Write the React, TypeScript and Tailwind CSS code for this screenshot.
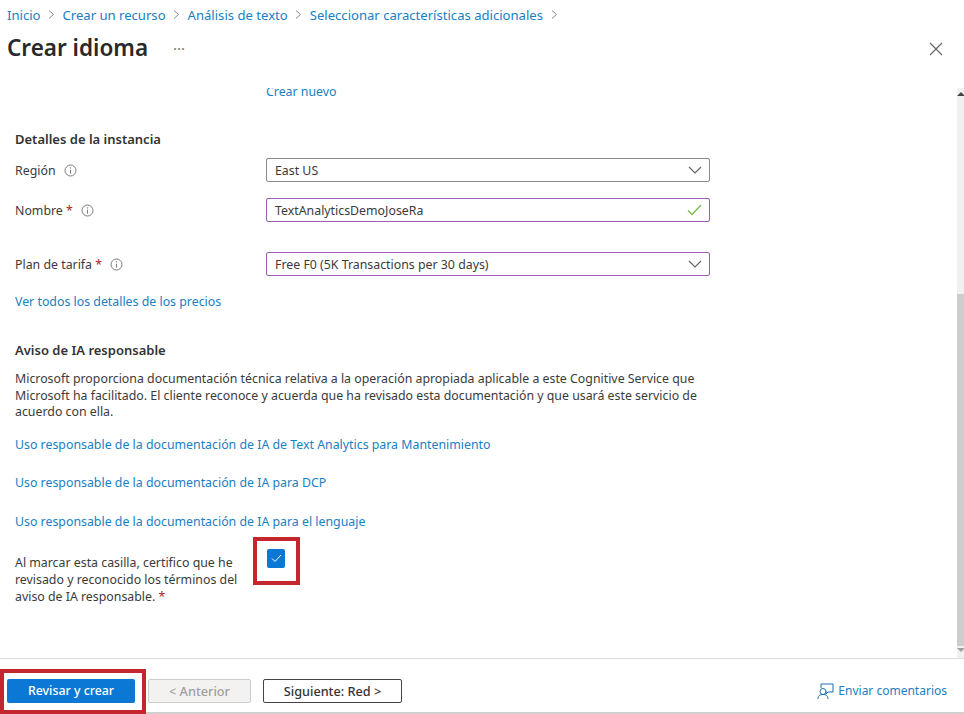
import React from "react";

const Chev = () => (
  <svg width="9" height="11" viewBox="0 0 9 11" fill="none" className="shrink-0">
    <path d="M2 1.5 L6.5 5.5 L2 9.5" stroke="#8a8a8a" strokeWidth="1" />
  </svg>
);

const Info = () => (
  <svg width="13" height="13" viewBox="0 0 13 13" fill="none" className="shrink-0">
    <circle cx="6.5" cy="6.5" r="5.5" stroke="#7a7a7a" strokeWidth="1" />
    <path d="M6.5 5.8 V9.6" stroke="#7a7a7a" strokeWidth="1" />
    <circle cx="6.5" cy="3.9" r="0.7" fill="#7a7a7a" />
  </svg>
);

const Down = () => (
  <svg width="14" height="8" viewBox="0 0 14 8" fill="none">
    <path d="M1 1 L7 7 L13 1" stroke="#666666" strokeWidth="1.2" />
  </svg>
);

const Req = () => <span className="text-[#a4262c]">*</span>;

function Row({ label, req, purple, value, icon, cls }: { label: string; req?: boolean; purple?: boolean; value: string; icon: React.ReactNode; cls: string }) {
  return (
    <div className={`flex items-center h-6 ${cls}`}>
      <div className="w-[251px] flex items-center gap-2">
        <span className="pt-px">{label}{req && <> <Req /></>}</span>
        <Info />
      </div>
      <div className={`w-[444px] h-6 flex items-center justify-between pl-2 pr-[7px] border rounded-[2px] ${purple ? "border-[#9a5fb0]" : "border-[#8a8a8a]"}`}>
        <span className="pt-px">{value}</span>
        {icon}
      </div>
    </div>
  );
}

const A = ({ children, cls = "" }: { children: React.ReactNode; cls?: string }) => (
  <a className={`block text-[#1a80c4] ${cls}`}>{children}</a>
);

export default function App() {
  return (
    <div className="relative w-[964px] h-[714px] bg-white overflow-hidden flex flex-col text-[12.35px] leading-4 text-[#3b3b3b] font-['Noto_Sans',sans-serif]">
      <nav className="h-[29px] pl-[7px] flex items-center gap-[6.5px] text-[#1a80c4] text-[13.1px]">
        <span>Inicio</span><Chev />
        <span>Crear un recurso</span><Chev />
        <span>Análisis de texto</span><Chev />
        <span>Seleccionar características adicionales</span><Chev />
      </nav>
      <header className="h-[59px] pl-[7px] pr-[21px] flex items-start justify-between">
        <div className="flex items-center h-[38px]">
          <h1 className="text-[22.5px] leading-7 font-semibold text-[#292929]">Crear idioma</h1>
          <span className="ml-[25px] text-[#777777] text-[15px] leading-none">···</span>
        </div>
        <svg width="14" height="14" viewBox="0 0 14 14" fill="none" className="mt-[13px]">
          <path d="M1 1 L13 13 M13 1 L1 13" stroke="#666666" strokeWidth="1.2" />
        </svg>
      </header>
      <div className="flex h-[571px] border-b border-[#dddddd]">
        <main className="flex-1 overflow-hidden pl-[15px]">
          <A cls="-mt-[4px] ml-[251px]">Crear nuevo</A>
          <h2 className="mt-[31px] text-[13px] font-semibold text-[#333333]">Detalles de la instancia</h2>
          <Row cls="mt-[11px]" label="Región" value="East US" icon={<Down />} />
          <Row cls="mt-4" label="Nombre" req purple value="TextAnalyticsDemoJoseRa" icon={
            <svg width="15" height="12" viewBox="0 0 15 12" fill="none"><path d="M1 6.5 L5 10.5 L14 1" stroke="#7fb84e" strokeWidth="1.3" /></svg>
          } />
          <Row cls="mt-[30px]" label="Plan de tarifa" req purple value="Free F0 (5K Transactions per 30 days)" icon={<Down />} />
          <A cls="mt-[18px]">Ver todos los detalles de los precios</A>
          <h2 className="mt-[32px] text-[13px] font-semibold text-[#333333]">Aviso de IA responsable</h2>
          <p className="mt-[13px] w-[690px] leading-[16.5px]">
            Microsoft proporciona documentación técnica relativa a la operación apropiada aplicable a este Cognitive Service que Microsoft ha facilitado. El cliente reconoce y acuerda que ha revisado esta documentación y que usará este servicio de acuerdo con ella.
          </p>
          <A cls="mt-[16px]">Uso responsable de la documentación de IA de Text Analytics para Mantenimiento</A>
          <A cls="mt-[22px]">Uso responsable de la documentación de IA para DCP</A>
          <A cls="mt-[23px]">Uso responsable de la documentación de IA para el lenguaje</A>
          <div className="flex mt-6 items-start">
            <p className="w-[251px] leading-[17px] pr-3">
              Al marcar esta casilla, certifico que he revisado y reconocido los términos del aviso de IA responsable. <Req />
            </p>
            <div className="w-[18px] h-[19px] rounded-[2px] bg-[#0a78d4] flex items-center justify-center -mt-[5px] ml-px">
              <svg width="11" height="9" viewBox="0 0 11 9" fill="none"><path d="M1 4.5 L4 7.5 L10 1" stroke="#ffffff" strokeWidth="1" /></svg>
            </div>
          </div>
        </main>
        <div className="w-[7px] bg-[#f0f0f0] flex flex-col items-center justify-between pt-[4px] pb-[6px]">
          <div className="w-0 h-0 border-x-[4px] border-x-transparent border-b-[4px] border-b-[#444444]" />
          <div className="w-full h-[352px] mt-[195px] bg-[#cdcdcd]" />
          <div className="w-0 h-0 border-x-[4px] border-x-transparent border-t-[4px] border-t-[#a0a0a0]" />
        </div>
      </div>
      <footer className="h-[55px] pl-[7px] pr-[17px] pt-5 flex items-start border-b-2 border-[#d0d0d0]">
        <button className="w-[128px] h-6 rounded-[2px] bg-[#0a78d4] text-white font-medium">Revisar y crear</button>
        <button className="ml-[13px] w-[103px] h-6 rounded-[2px] border border-[#cccccc] bg-[#f3f2f1] text-[#a19f9d] text-[12.7px] font-medium">&lt; Anterior</button>
        <button className="ml-3 w-[139px] h-6 rounded-[2px] border border-[#444444] text-[#333333] text-[12.7px] font-medium">Siguiente: Red &gt;</button>
        <div className="ml-auto h-6 flex items-center gap-[4px] text-[#1a80c4]">
          <svg width="17" height="17" viewBox="0 0 17 17" fill="none" stroke="#1a6fb5" strokeWidth="1">
            <path d="M4 5 V1 H16 V9 H11 L9 11 V8" />
            <circle cx="6" cy="8.5" r="3" />
            <path d="M1 16 C1 12.5 3 11.5 6 11.5 C9 11.5 11 12.5 11 16" />
          </svg>
          <span className="text-[12px]">Enviar comentarios</span>
        </div>
      </footer>
      <div className="absolute left-[253px] top-[537px] w-[47px] h-[48px] border-4 border-[#c4262e]" />
      <div className="absolute left-0 top-[669px] w-[146px] h-[45px] border-4 border-[#c4262e]" />
    </div>
  );
}
